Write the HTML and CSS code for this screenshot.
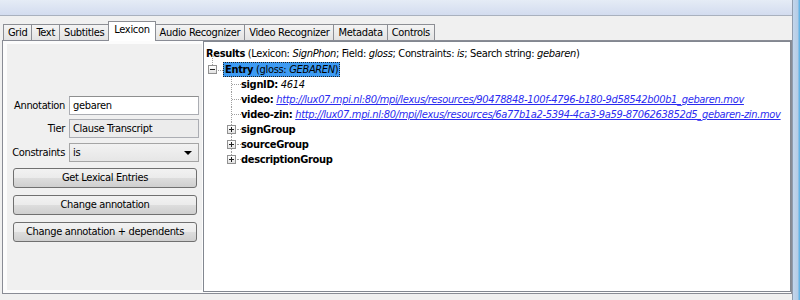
FILE: index.html
```html
<!DOCTYPE html>
<html>
<head>
<meta charset="utf-8">
<link rel="stylesheet" href="styles.css">
</head>
<body>
<div class="window">
  <div class="titlebar"></div>
  <div class="client">
    <div class="tabs">
      <div class="tab">Grid</div>
      <div class="tab">Text</div>
      <div class="tab">Subtitles</div>
      <div class="tab sel">Lexicon</div>
      <div class="tab">Audio Recognizer</div>
      <div class="tab">Video Recognizer</div>
      <div class="tab">Metadata</div>
      <div class="tab">Controls</div>
    </div>
    <div class="panel">
      <div class="side">
        <div class="form">
          <label class="lbl">Annotation</label>
          <div class="field input">gebaren</div>
          <label class="lbl">Tier</label>
          <div class="field disabled">Clause Transcript</div>
          <label class="lbl">Constraints</label>
          <div class="field combo"><span>is</span><span class="arrow"></span></div>
        </div>
        <div class="buttons">
          <div class="btn">Get Lexical Entries</div>
          <div class="btn">Change annotation</div>
          <div class="btn">Change annotation + dependents</div>
        </div>
      </div>
      <div class="results">
        <div class="header"><b>Results</b> (Lexicon: <i>SignPhon</i>; Field: <i>gloss</i>; Constraints: <i>is</i>; Search string: <i>gebaren</i>)</div>
        <div class="tree">
          <div class="row root">
            <div class="rgut">
              <div class="vcol"><span class="vup"></span><span class="box minus"></span></div>
              <span class="stub"></span>
            </div>
            <div class="sel-label"><b>Entry</b> (gloss: <i>GEBAREN</i>)</div>
          </div>
          <div class="row">
            <div class="gut"><span class="leafline"><span class="h"></span></span></div>
            <div class="txt"><b>signID:</b> <i>4614</i></div>
          </div>
          <div class="row">
            <div class="gut"><span class="leafline"><span class="h"></span></span></div>
            <div class="txt"><b>video:</b> <a class="link">http://lux07.mpi.nl:80/mpi/lexus/resources/90478848-100f-4796-b180-9d58542b00b1_gebaren.mov</a></div>
          </div>
          <div class="row">
            <div class="gut"><span class="leafline"><span class="h"></span></span></div>
            <div class="txt"><b>video-zin:</b> <a class="link">http://lux07.mpi.nl:80/mpi/lexus/resources/6a77b1a2-5394-4ca3-9a59-8706263852d5_gebaren-zin.mov</a></div>
          </div>
          <div class="row">
            <div class="gut"><div class="pcol"><span class="v"></span><span class="box plus"></span><span class="v"></span></div><span class="stub2"></span></div>
            <div class="txt"><b>signGroup</b></div>
          </div>
          <div class="row">
            <div class="gut"><div class="pcol"><span class="v"></span><span class="box plus"></span><span class="v"></span></div><span class="stub2"></span></div>
            <div class="txt"><b>sourceGroup</b></div>
          </div>
          <div class="row">
            <div class="gut"><div class="pcol"><span class="v"></span><span class="box plus"></span><span class="v none"></span></div><span class="stub2"></span></div>
            <div class="txt"><b>descriptionGroup</b></div>
          </div>
        </div>
      </div>
    </div>
  </div>
</div>
<div class="edge"></div>
</body>
</html>
```
FILE: styles.css
```css
html, body { margin: 0; padding: 0; }
body {
  width: 800px;
  height: 300px;
  overflow: hidden;
  display: flex;
  background: #f0f0f0;
  font-family: "DejaVu Sans Condensed", Tahoma, "Liberation Sans", sans-serif;
  font-size: 11px;
  letter-spacing: -0.33px;
  color: #000;
}
.window { width: 792px; display: flex; flex-direction: column; }
.edge {
  width: 8px;
  background: linear-gradient(to right, #8f9cae 0, #8f9cae 1px, #c2d6ec 1px, #b4cbe5 6px, #63b4e6 7px, #63b4e6 8px);
}
.titlebar {
  height: 15px;
  background: linear-gradient(#e5ecf6, #d3dcef);
  border-bottom: 1px solid #a9b1be;
}
.client { flex: 1; display: flex; flex-direction: column; padding: 6px 0 6px 2px; }
.tabs { display: flex; align-items: flex-end; height: 18px; padding-left: 1px; position: relative; z-index: 1; }
.tab {
  height: 15px;
  line-height: 15px;
  padding: 0 4px;
  border: 1px solid #8c8e94;
  border-bottom: none;
  border-right: none;
  background: linear-gradient(#f4f4f4, #e3e3e3);
  white-space: nowrap;
}
.tab:last-child { border-right: 1px solid #8c8e94; }
.tab.sel {
  height: 19px;
  line-height: 16px;
  margin-bottom: -1px;
  background: #fff;
  padding: 0 5px;
  border-right: 1px solid #8c8e94;
}
.tab.sel + .tab { border-left: none; }
.panel {
  flex: 1;
  border: 1px solid #898c95;
  background: #fcfcfc;
  display: flex;
}
.side {
  width: 195px;
  margin: 3px 1px 3px 4px;
  background: #f0f0f0;
  display: flex;
  flex-direction: column;
  padding-top: 52px;
  box-sizing: border-box;
}
.form {
  display: grid;
  grid-template-columns: 58px 130px;
  column-gap: 4px;
  row-gap: 4px;
  align-items: center;
}
.lbl { text-align: right; white-space: nowrap; }
.field {
  height: 19px;
  box-sizing: border-box;
  border: 1px solid #abadb3;
  line-height: 17px;
  padding: 0 3px;
  white-space: nowrap;
  overflow: hidden;
}
.input { background: #fff; border-top-color: #8e8f8f; }
.disabled { background: #ececec; }
.combo {
  display: flex;
  justify-content: space-between;
  align-items: center;
  background: linear-gradient(#f2f2f2, #e6e6e6);
  border-color: #a5a5a5;
  margin-top: 1px;
}
.arrow {
  width: 0; height: 0;
  border-left: 4px solid transparent;
  border-right: 4px solid transparent;
  border-top: 4px solid #000;
  margin-right: 3px;
}
.buttons { display: flex; flex-direction: column; gap: 7px; margin: 6px 0 0 6px; }
.btn {
  width: 184px;
  height: 20px;
  box-sizing: border-box;
  border: 1px solid #707070;
  border-radius: 3px;
  background: linear-gradient(#f2f2f2 0%, #ebebeb 50%, #dddddd 51%, #cfcfcf 100%);
  text-align: center;
  line-height: 18px;
  white-space: nowrap;
}
.results {
  flex: 1;
  border: 1px solid #828790;
  background: #fff;
  margin-bottom: 1px;
  padding: 4px 0 0 1px;
}
.header { line-height: 15px; height: 15px; white-space: nowrap; padding-left: 1px; }
.tree { display: flex; flex-direction: column; margin-top: 1px; }
.row { display: flex; height: 15px; align-items: stretch; white-space: nowrap; }
.rgut { display: flex; padding-left: 3px; align-items: stretch; }
.vcol { width: 9px; display: flex; flex-direction: column; align-items: center; }
.vup { width: 0; margin-top: -7px; flex: none; height: 10px; border-left: 1px dotted #a0a0a0; }
.box {
  width: 9px; height: 9px; box-sizing: border-box;
  border: 1px solid #919191;
  background: linear-gradient(#ffffff, #e2e2e2);
  position: relative;
  flex: none;
}
.box::before {
  content: ""; position: absolute; left: 1px; top: 3px; width: 5px; height: 1px; background: #222;
}
.box.plus::after {
  content: ""; position: absolute; left: 3px; top: 1px; width: 1px; height: 5px; background: #222;
}
.stub { width: 5px; align-self: center; border-top: 1px dotted #a0a0a0; margin-left: 1px; margin-top: 1px; }
.sel-label {
  background: #3d9bf3;
  border: 1px dotted #222;
  padding: 0 1px;
  line-height: 13px;
}
.gut { width: 36px; flex: none; display: flex; align-items: stretch; }
.leafline {
  margin-left: 26px;
  width: 10px;
  border-left: 1px dotted #a0a0a0;
  display: flex;
  align-items: center;
}
.h { width: 9px; border-top: 1px dotted #a0a0a0; }
.pcol { margin-left: 22px; width: 9px; display: flex; flex-direction: column; align-items: center; }
.pcol .v { flex: 1; width: 0; border-left: 1px dotted #a0a0a0; }
.pcol .v.none { border-left: none; }
.stub2 { width: 4px; align-self: center; border-top: 1px dotted #a0a0a0; margin-left: 1px; }
.txt { line-height: 15px; }
.link { color: #2b2bf0; text-decoration: underline; font-style: italic; }
```
